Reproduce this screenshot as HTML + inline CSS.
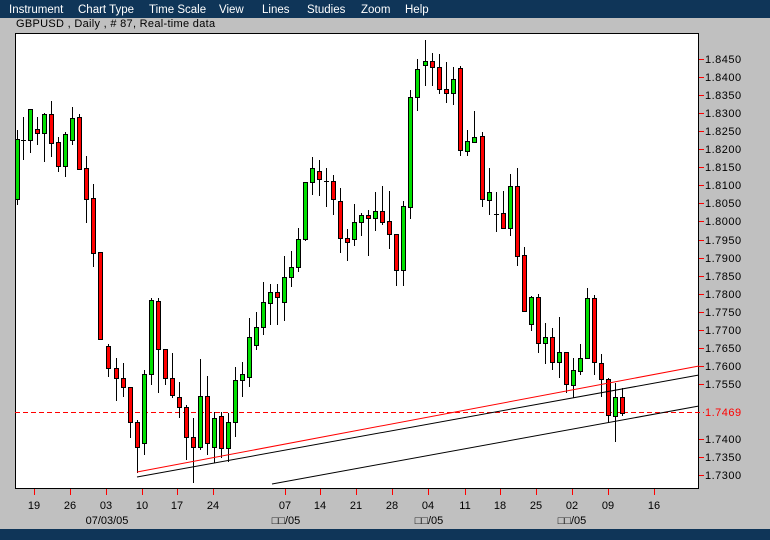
<!DOCTYPE html>
<html><head><meta charset="utf-8"><style>
*{margin:0;padding:0}
body{width:770px;height:540px;background:#c0c0c0;position:relative;overflow:hidden;font-family:"Liberation Sans",Arial,sans-serif}
#menu{position:absolute;left:0;top:0;width:770px;height:18px;background:#0f3558;color:#fff;font-size:11.5px}
#menu span{position:absolute;top:4px}
#title{position:absolute;left:16px;top:18px;font-size:11px;color:#000;letter-spacing:0.3px}
#bot{position:absolute;left:0;top:529px;width:770px;height:11px;background:#0f3558}
svg{position:absolute;left:0;top:0}
</style></head><body>
<div id="menu"><span style="left:9px">Instrument</span><span style="left:78px">Chart Type</span><span style="left:149px">Time Scale</span><span style="left:219px">View</span><span style="left:262px">Lines</span><span style="left:307px">Studies</span><span style="left:361px">Zoom</span><span style="left:405px">Help</span></div>
<div id="title">GBPUSD , Daily , # 87, Real-time data</div>
<div id="bot"></div>
<svg width="770" height="540" xmlns="http://www.w3.org/2000/svg">
<rect x="15.5" y="33.5" width="683" height="455" fill="#fff" stroke="#000"/>
<line x1="15" y1="412.5" x2="704" y2="412.5" stroke="#f00" stroke-dasharray="5,3"/>
<g stroke="#000" stroke-width="1" shape-rendering="crispEdges">
<path d="M17.5 130V205M23.5 117V160M30.5 109V153M37.5 117V145M44.5 113V162M51.5 101V157M58.5 137V172M65.5 132V177M72.5 107V145M79.5 114V170M86.5 156V223M93.5 184V267M100.5 252V339M108.5 344V377M116.5 358V401M123.5 363V397M130.5 387V438M137.5 420V473M144.5 370V455M151.5 298V385M158.5 298V393M165.5 349V385M172.5 353V398M179.5 382V418M186.5 405V460M193.5 418V483M200.5 359V450M207.5 376V455M214.5 412V463M221.5 412V458M228.5 413V462M235.5 367V437M242.5 362V397M249.5 318V387M256.5 312V350M263.5 282V335M270.5 284V325M277.5 284V325M284.5 256V321M291.5 251V287M298.5 228V272M305.5 182V241M312.5 157V195M319.5 160V196M326.5 168V207M333.5 175V215M340.5 188V253M347.5 229V261M354.5 204V246M361.5 213V236M368.5 210V256M375.5 192V231M382.5 186V225M389.5 191V249M396.5 234V286M403.5 201V286M410.5 90V219M417.5 59V111M425.5 40V86M432.5 53V86M439.5 54V94M446.5 62V103M453.5 67V105M460.5 66V156M467.5 130V156M474.5 111V143M482.5 132V207M489.5 168V215M496.5 192V232M503.5 191V228M510.5 174V236M517.5 168V266M524.5 247V312M531.5 296V331M538.5 294V353M545.5 323V364M552.5 328V370M559.5 317V378M566.5 352V393M573.5 358V398M580.5 344V375M587.5 288V358M594.5 295V375M601.5 354V397M608.5 378V423M615.5 383V442M622.5 388V416"/>
<path d="M21 140.5h5M324 181.5h5M494 214.5h5"/>
</g>
<g stroke="#000" stroke-width="1" fill="#f00" shape-rendering="crispEdges">
<rect x="35.5" y="129.5" width="4" height="4"/><rect x="49.5" y="114.5" width="4" height="29"/><rect x="56.5" y="142.5" width="4" height="24"/><rect x="77.5" y="117.5" width="4" height="52"/><rect x="84.5" y="168.5" width="4" height="31"/><rect x="91.5" y="198.5" width="4" height="55"/><rect x="98.5" y="252.5" width="4" height="87"/><rect x="106.5" y="346.5" width="4" height="22"/><rect x="114.5" y="368.5" width="4" height="10"/><rect x="121.5" y="378.5" width="4" height="9"/><rect x="128.5" y="387.5" width="4" height="35"/><rect x="135.5" y="422.5" width="4" height="25"/><rect x="156.5" y="301.5" width="4" height="48"/><rect x="163.5" y="349.5" width="4" height="29"/><rect x="170.5" y="378.5" width="4" height="17"/><rect x="177.5" y="397.5" width="4" height="10"/><rect x="184.5" y="407.5" width="4" height="30"/><rect x="191.5" y="437.5" width="4" height="10"/><rect x="205.5" y="396.5" width="4" height="47"/><rect x="219.5" y="416.5" width="4" height="32"/><rect x="275.5" y="292.5" width="4" height="5"/><rect x="317.5" y="171.5" width="4" height="8"/><rect x="331.5" y="181.5" width="4" height="18"/><rect x="338.5" y="201.5" width="4" height="37"/><rect x="345.5" y="238.5" width="4" height="4"/><rect x="366.5" y="215.5" width="4" height="3"/><rect x="380.5" y="211.5" width="4" height="11"/><rect x="387.5" y="221.5" width="4" height="13"/><rect x="394.5" y="234.5" width="4" height="36"/><rect x="430.5" y="61.5" width="4" height="6"/><rect x="437.5" y="67.5" width="4" height="22"/><rect x="444.5" y="89.5" width="4" height="4"/><rect x="458.5" y="68.5" width="4" height="82"/><rect x="480.5" y="136.5" width="4" height="63"/><rect x="501.5" y="213.5" width="4" height="15"/><rect x="515.5" y="186.5" width="4" height="70"/><rect x="522.5" y="255.5" width="4" height="56"/><rect x="536.5" y="297.5" width="4" height="46"/><rect x="550.5" y="337.5" width="4" height="25"/><rect x="564.5" y="352.5" width="4" height="32"/><rect x="592.5" y="298.5" width="4" height="64"/><rect x="599.5" y="363.5" width="4" height="16"/><rect x="606.5" y="379.5" width="4" height="36"/><rect x="620.5" y="397.5" width="4" height="16"/>
</g>
<g stroke="#000" stroke-width="1" fill="#00e000" shape-rendering="crispEdges">
<rect x="15.5" y="139.5" width="4" height="60"/><rect x="28.5" y="109.5" width="4" height="31"/><rect x="42.5" y="114.5" width="4" height="19"/><rect x="63.5" y="134.5" width="4" height="32"/><rect x="70.5" y="118.5" width="4" height="22"/><rect x="142.5" y="374.5" width="4" height="69"/><rect x="149.5" y="300.5" width="4" height="74"/><rect x="198.5" y="396.5" width="4" height="51"/><rect x="212.5" y="418.5" width="4" height="29"/><rect x="226.5" y="422.5" width="4" height="26"/><rect x="233.5" y="380.5" width="4" height="42"/><rect x="240.5" y="374.5" width="4" height="6"/><rect x="247.5" y="337.5" width="4" height="40"/><rect x="254.5" y="327.5" width="4" height="18"/><rect x="261.5" y="302.5" width="4" height="25"/><rect x="268.5" y="292.5" width="4" height="11"/><rect x="282.5" y="277.5" width="4" height="25"/><rect x="289.5" y="267.5" width="4" height="10"/><rect x="296.5" y="239.5" width="4" height="28"/><rect x="303.5" y="182.5" width="4" height="57"/><rect x="310.5" y="168.5" width="4" height="14"/><rect x="352.5" y="222.5" width="4" height="17"/><rect x="359.5" y="215.5" width="4" height="7"/><rect x="373.5" y="211.5" width="4" height="7"/><rect x="401.5" y="206.5" width="4" height="64"/><rect x="408.5" y="97.5" width="4" height="110"/><rect x="415.5" y="69.5" width="4" height="28"/><rect x="423.5" y="61.5" width="4" height="4"/><rect x="451.5" y="79.5" width="4" height="14"/><rect x="465.5" y="141.5" width="4" height="10"/><rect x="472.5" y="137.5" width="4" height="5"/><rect x="487.5" y="192.5" width="4" height="8"/><rect x="508.5" y="186.5" width="4" height="42"/><rect x="529.5" y="297.5" width="4" height="27"/><rect x="543.5" y="337.5" width="4" height="6"/><rect x="557.5" y="352.5" width="4" height="10"/><rect x="571.5" y="370.5" width="4" height="15"/><rect x="578.5" y="358.5" width="4" height="13"/><rect x="585.5" y="298.5" width="4" height="60"/><rect x="613.5" y="397.5" width="4" height="19"/>
</g>
<line x1="137" y1="472" x2="699" y2="366" stroke="#f00"/>
<line x1="137" y1="477" x2="699" y2="375" stroke="#000"/>
<line x1="272" y1="484" x2="699" y2="406" stroke="#000"/>
<g stroke="#f00" shape-rendering="crispEdges">
<path d="M699 59.5h5M699 77.5h5M699 95.5h5M699 113.5h5M699 131.5h5M699 149.5h5M699 167.5h5M699 185.5h5M699 203.5h5M699 221.5h5M699 240.5h5M699 258.5h5M699 276.5h5M699 294.5h5M699 312.5h5M699 330.5h5M699 348.5h5M699 366.5h5M699 384.5h5M699 439.5h5M699 457.5h5M699 475.5h5"/>
<path d="M34.5 489v6M70.5 489v6M106.5 489v6M142.5 489v6M177.5 489v6M213.5 489v6M285.5 489v6M320.5 489v6M356.5 489v6M392.5 489v6M428.5 489v6M465.5 489v6M500.5 489v6M536.5 489v6M572.5 489v6M608.5 489v6M654.5 489v6"/>
</g>
<g font-family="Liberation Sans, Arial, sans-serif" font-size="11" fill="#000" letter-spacing="0.5">
<text x="705" y="63">1.8450</text><text x="705" y="81">1.8400</text><text x="705" y="99">1.8350</text><text x="705" y="117">1.8300</text><text x="705" y="135">1.8250</text><text x="705" y="153">1.8200</text><text x="705" y="171">1.8150</text><text x="705" y="189">1.8100</text><text x="705" y="207">1.8050</text><text x="705" y="225">1.8000</text><text x="705" y="244">1.7950</text><text x="705" y="262">1.7900</text><text x="705" y="280">1.7850</text><text x="705" y="298">1.7800</text><text x="705" y="316">1.7750</text><text x="705" y="334">1.7700</text><text x="705" y="352">1.7650</text><text x="705" y="370">1.7600</text><text x="705" y="388">1.7550</text><text x="705" y="416" fill="#f00">1.7469</text><text x="705" y="443">1.7400</text><text x="705" y="461">1.7350</text><text x="705" y="479">1.7300</text>
</g>
<g font-family="Liberation Sans, Arial, sans-serif" font-size="11" fill="#000" text-anchor="middle">
<text x="34" y="509">19</text><text x="70" y="509">26</text><text x="106" y="509">03</text><text x="142" y="509">10</text><text x="177" y="509">17</text><text x="213" y="509">24</text><text x="285" y="509">07</text><text x="320" y="509">14</text><text x="356" y="509">21</text><text x="392" y="509">28</text><text x="428" y="509">04</text><text x="465" y="509">11</text><text x="500" y="509">18</text><text x="536" y="509">25</text><text x="572" y="509">02</text><text x="608" y="509">09</text><text x="654" y="509">16</text>
<text x="107" y="524">07/03/05</text><text x="286" y="524">□□/05</text><text x="429" y="524">□□/05</text><text x="572" y="524">□□/05</text>
</g>
</svg>
</body></html>
